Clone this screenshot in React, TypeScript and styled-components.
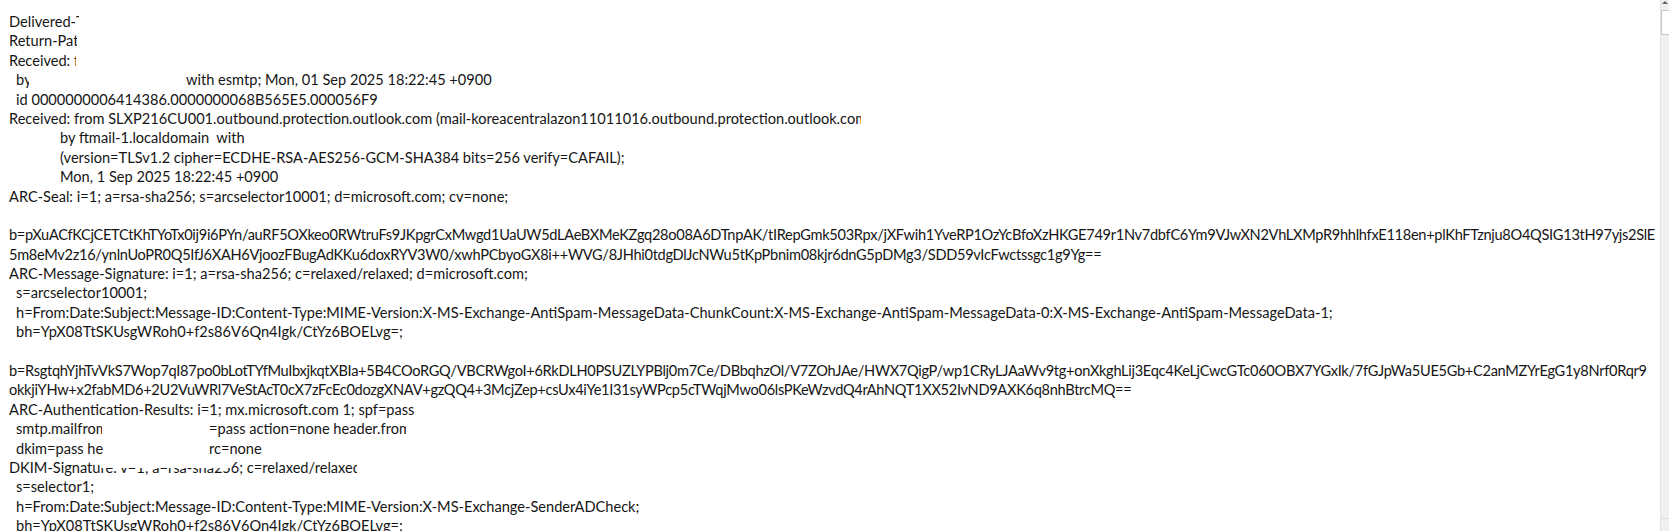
import React from "react";
import styled, { createGlobalStyle } from "styled-components";

const Global = createGlobalStyle`
  html, body { margin: 0; padding: 0; background: #fff; }
  body { overflow: hidden; }
`;

const Page = styled.div`
  display: flex;
  width: 1669px;
  height: 531px;
  overflow: hidden;
  background: #fff;
`;

const Doc = styled.div`
  flex: 1;
  min-width: 0;
  padding: 12px 0 0 9px;
  font-family: Lato, "Liberation Sans", sans-serif;
  font-size: 14.6px;
  line-height: 19.4px;
  color: #151515;
  overflow: hidden;
`;

const Line = styled.div<{ $indent?: number }>`
  height: 19.4px;
  white-space: pre;
  padding-left: ${(p) => p.$indent ?? 0}px;
`;

const DataLine = styled(Line)`
  letter-spacing: -0.3px;
`;

const Slot = styled.span<{ $w: number }>`
  display: inline-block;
  vertical-align: top;
  width: ${(p) => p.$w}px;
`;

const Clip = styled.span<{ $w: number }>`
  display: inline-block;
  vertical-align: top;
  width: ${(p) => p.$w}px;
  overflow: hidden;
  white-space: pre;
`;

const Veiled = styled.span`
  position: relative;
  &::after {
    content: "";
    position: absolute;
    left: 0;
    right: 0;
    top: -2px;
    height: 62%;
    background: #fff;
  }
`;

const Scrollbar = styled.div`
  width: 8px;
  flex: none;
  background: #f0f0f0;
  border-left: 1px solid #e3e3e3;
  display: flex;
  flex-direction: column;
`;

const ScrollArrow = styled.div`
  height: 10px;
  background: #f0f0f0;
  display: flex;
  align-items: flex-start;
  justify-content: center;
  svg { display: block; }
`;

const ScrollThumb = styled.div`
  height: 23px;
  background: #fff;
  border: 1px solid #c8c8c8;
  border-right: none;
`;

const ScrollTrack = styled.div`
  flex: 1;
  background: #f0f0f0;
  border-bottom: 1px solid #dcdcdc;
  margin-bottom: 12px;
`;

const b1a =
  "b=pXuACfKCjCETCtKhTYoTx0ij9i6PYn/auRF5OXkeo0RWtruFs9JKpgrCxMwgd1UaUW5dLAeBXMeKZgq28o08A6DTnpAK/tIRepGmk503Rpx/jXFwih1YveRP1OzYcBfoXzHKGE749r1Nv7dbfC6Ym9VJwXN2VhLXMpR9hhlhfxE118en+plKhFTznju8O4QSIG13tH97yjs2SlE";
const b1b =
  "5m8eMv2z16/ynlnUoPR0Q5IfJ6XAH6VjoozFBugAdKKu6doxRYV3W0/xwhPCbyoGX8i++WVG/8JHhi0tdgDlJcNWu5tKpPbnim08kjr6dnG5pDMg3/SDD59vIcFwctssgc1g9Yg==";
const b2a =
  "b=RsgtqhYjhTvVkS7Wop7qI87po0bLotTYfMuIbxjkqtXBIa+5B4COoRGQ/VBCRWgoI+6RkDLH0PSUZLYPBlj0m7Ce/DBbqhzOl/V7ZOhJAe/HWX7QigP/wp1CRyLJAaWv9tg+onXkghLij3Eqc4KeLjCwcGTc060OBX7YGxIk/7fGJpWa5UE5Gb+C2anMZYrEgG1y8Nrf0Rqr9";
const b2b =
  "okkjiYHw+x2fabMD6+2U2VuWRl7VeStAcT0cX7zFcEc0dozgXNAV+gzQQ4+3McjZep+csUx4iYe1I31syWPcp5cTWqjMwo06lsPKeWzvdQ4rAhNQT1XX52IvND9AXK6q8nhBtrcMQ==";

export default function App() {
  return (
    <>
      <Global />
      <Page>
        <Doc>
          <Line>
            Delivered-<Clip $w={3}>T</Clip>
          </Line>
          <Line>
            Return-Pa<Clip $w={4}>t</Clip>
          </Line>
          <Line>
            Received: <Clip $w={2}>f</Clip>
          </Line>
          <Line $indent={7}>
            <Slot $w={170}>
              b<Clip $w={5}>y</Clip>
            </Slot>
            with esmtp; Mon, 01 Sep 2025 18:22:45 +0900
          </Line>
          <Line $indent={7}>id 0000000006414386.0000000068B565E5.000056F9</Line>
          <Line>
            Received: from SLXP216CU001.outbound.protection.outlook.com
            (mail-koreacentralazon11011016.outbound.protection.outlook.co<Clip $w={6}>m</Clip>
          </Line>
          <Line $indent={51}>by ftmail-1.localdomain  with</Line>
          <Line $indent={51}>
            (version=TLSv1.2 cipher=ECDHE-RSA-AES256-GCM-SHA384 bits=256 verify=CAFAIL);
          </Line>
          <Line $indent={51}>Mon, 1 Sep 2025 18:22:45 +0900</Line>
          <Line>ARC-Seal: i=1; a=rsa-sha256; s=arcselector10001; d=microsoft.com; cv=none;</Line>
          <Line />
          <DataLine>{b1a}</DataLine>
          <DataLine>{b1b}</DataLine>
          <Line>ARC-Message-Signature: i=1; a=rsa-sha256; c=relaxed/relaxed; d=microsoft.com;</Line>
          <Line $indent={7}>s=arcselector10001;</Line>
          <Line $indent={7}>
            h=From:Date:Subject:Message-ID:Content-Type:MIME-Version:X-MS-Exchange-AntiSpam-MessageData-ChunkCount:X-MS-Exchange-AntiSpam-MessageData-0:X-MS-Exchange-AntiSpam-MessageData-1;
          </Line>
          <Line $indent={7}>bh=YpX08TtSKUsgWRoh0+f2s86V6Qn4Igk/CtYz6BOELvg=;</Line>
          <Line />
          <DataLine>{b2a}</DataLine>
          <DataLine>{b2b}</DataLine>
          <Line>ARC-Authentication-Results: i=1; mx.microsoft.com 1; spf=pass</Line>
          <Line $indent={7}>
            <Slot $w={193}>
              smtp.mailfro<Clip $w={6}>m</Clip>
            </Slot>
            =pass action=none header.fro<Clip $w={7}>m</Clip>
          </Line>
          <Line $indent={7}>
            <Slot $w={193}>dkim=pass he</Slot>
            rc=none
          </Line>
          <Line>
            DKIM-Signatu<Veiled>re: v=1; a=rsa-sha25</Veiled>6; c=relaxed/relaxe<Clip $w={4}>d</Clip>
          </Line>
          <Line $indent={7}>s=selector1;</Line>
          <Line $indent={7}>
            h=From:Date:Subject:Message-ID:Content-Type:MIME-Version:X-MS-Exchange-SenderADCheck;
          </Line>
          <Line $indent={7}>bh=YpX08TtSKUsgWRoh0+f2s86V6Qn4Igk/CtYz6BOELvg=;</Line>
        </Doc>
        <Scrollbar>
          <ScrollArrow>
            <svg width="8" height="5" viewBox="0 0 8 5">
              <path d="M1 4 L4 1 L7 4 Z" fill="#606060" />
            </svg>
          </ScrollArrow>
          <ScrollThumb />
          <ScrollTrack />
        </Scrollbar>
      </Page>
    </>
  );
}
